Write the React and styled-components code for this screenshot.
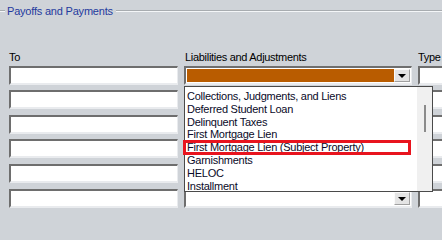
import React from "react";
import styled, { createGlobalStyle } from "styled-components";

const GlobalStyle = createGlobalStyle`
  html, body {
    margin: 0;
    padding: 0;
    background: #cfd3d8;
    overflow: hidden;
  }
  body {
    font-family: "Liberation Sans", Arial, sans-serif;
    font-size: 11px;
    color: #000;
  }
`;

const GroupBox = styled.div`
  position: relative;
  width: 442px;
  height: 213px;
  padding-top: 4px;
  box-sizing: border-box;
`;

const GroupTitle = styled.div`
  display: flex;
  align-items: center;
  height: 14px;
  color: #1f3a9e;
  font-size: 11px;
  letter-spacing: -0.2px;

  &::before,
  &::after {
    content: "";
    height: 0;
    border-top: 1px solid #a8acb0;
    border-bottom: 1px solid #f4f6f8;
  }
  &::before {
    width: 5px;
    margin-right: 2px;
  }
  &::after {
    flex: 1;
    margin-left: 3px;
  }
`;

const Form = styled.div`
  display: grid;
  grid-template-columns: 169px 228px 40px;
  column-gap: 6px;
  grid-auto-rows: 19.6px;
  row-gap: 5px;
  padding: 23px 0 0 9px;
`;

const Label = styled.div`
  align-self: end;
  margin-bottom: -2px;
  font-size: 11px;
  letter-spacing: -0.3px;
  white-space: nowrap;
  margin-left: ${(p) => p.$shift || 0}px;
`;

const TextBox = styled.div`
  box-sizing: border-box;
  height: 19px;
  background: #fff;
  border-top: 2px solid #6e6e6e;
  border-left: 2px solid #6e6e6e;
  border-bottom: 2px solid #e9ebee;
  border-right: 1px solid #e9ebee;
`;

const Combo = styled(TextBox)`
  display: flex;
  padding: 1px;
  background: #fff;
`;

const ComboValue = styled.div`
  flex: 1;
  background: ${(p) => p.$fill || "#fff"};
`;

const DropButton = styled.div`
  width: 16px;
  display: flex;
  align-items: center;
  justify-content: center;
  box-sizing: border-box;
  background: #e4e4e4;
  border-left: 1px solid #fafafa;
  border-top: 1px solid #fafafa;
  border-right: 1px solid #a0a0a0;
  border-bottom: 1px solid #a0a0a0;
`;

const Arrow = styled.div`
  width: 0;
  height: 0;
  margin-top: 1px;
  border-left: 4px solid transparent;
  border-right: 4px solid transparent;
  border-top: 4px solid #000;
`;

const ListPopup = styled.div`
  position: absolute;
  left: 184px;
  top: 86px;
  width: 249px;
  height: 106px;
  box-sizing: border-box;
  background: #fff;
  border: 1px solid #4a4a4a;
  display: flex;
  overflow: hidden;
`;

const Items = styled.div`
  flex: 1;
  padding: 3px 0 0 2px;
`;

const Item = styled.div`
  height: 12.8px;
  line-height: 13px;
  font-size: 11px;
  letter-spacing: -0.25px;
  color: #0a0a28;
  white-space: nowrap;
`;

const ScrollTrack = styled.div`
  width: 15px;
  background: #f0f0f0;
  display: flex;
  justify-content: center;
  padding-top: 18px;
`;

const Thumb = styled.div`
  width: 2px;
  height: 27px;
  background: #8b8b8b;
`;

const Highlight = styled.div`
  position: absolute;
  left: 183px;
  top: 140px;
  width: 228px;
  height: 15px;
  box-sizing: border-box;
  border: 3px solid #e8141e;
`;

const items = [
  "Collections, Judgments, and Liens",
  "Deferred Student Loan",
  "Delinquent Taxes",
  "First Mortgage Lien",
  "First Mortgage Lien (Subject Property)",
  "Garnishments",
  "HELOC",
  "Installment",
];

const App = () => {
  const rows = [0, 1, 2, 3, 4, 5];
  return (
    <>
      <GlobalStyle />
      <GroupBox>
        <GroupTitle>Payoffs and Payments</GroupTitle>
        <Form>
          <Label>To</Label>
          <Label $shift={1}>Liabilities and Adjustments</Label>
          <Label>Type</Label>
          {rows.map((r) => (
            <React.Fragment key={r}>
              <TextBox />
              <Combo>
                <ComboValue $fill={r === 0 ? "#b95c00" : undefined} />
                <DropButton>
                  <Arrow />
                </DropButton>
              </Combo>
              <TextBox />
            </React.Fragment>
          ))}
        </Form>
        <ListPopup>
          <Items>
            {items.map((t) => (
              <Item key={t}>{t}</Item>
            ))}
          </Items>
          <ScrollTrack>
            <Thumb />
          </ScrollTrack>
        </ListPopup>
        <Highlight />
      </GroupBox>
    </>
  );
};

export default App;
